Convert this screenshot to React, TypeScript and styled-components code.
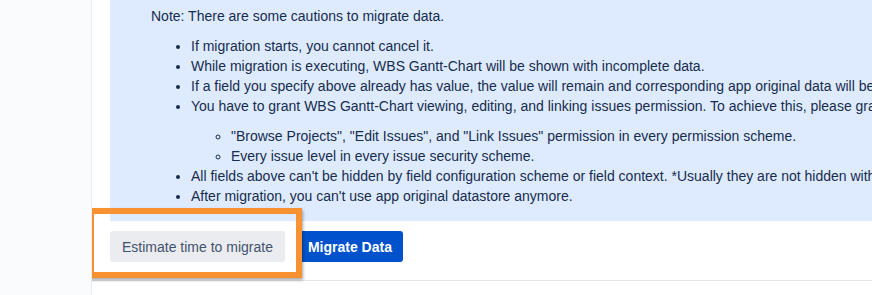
import * as React from 'react';
import styled, { createGlobalStyle } from 'styled-components';

const GlobalStyle = createGlobalStyle`
  html, body {
    margin: 0;
    padding: 0;
    background: #ffffff;
  }
  body {
    font-family: "Liberation Sans", Arial, sans-serif;
    font-size: 14px;
    color: #172b4d;
  }
`;

const cautions = [
  'If migration starts, you cannot cancel it.',
  'While migration is executing, WBS Gantt-Chart will be shown with incomplete data.',
  'If a field you specify above already has value, the value will remain and corresponding app original data will be discarded.',
  'You have to grant WBS Gantt-Chart viewing, editing, and linking issues permission. To achieve this, please grant the following.',
];

const permissions = [
  '"Browse Projects", "Edit Issues", and "Link Issues" permission in every permission scheme.',
  'Every issue level in every issue security scheme.',
];

const trailing = [
  "All fields above can't be hidden by field configuration scheme or field context. *Usually they are not hidden without special settings.",
  "After migration, you can't use app original datastore anymore.",
];

export default function App() {
  return (
    <>
      <GlobalStyle />
      <Page>
        <Sidebar />
        <Main>
          <Section>
            <Notice>
              <Note>Note: There are some cautions to migrate data.</Note>
              <List>
                {cautions.map((text) => (
                  <Item key={text}>{text}</Item>
                ))}
                <SubList>
                  {permissions.map((text) => (
                    <Item key={text}>{text}</Item>
                  ))}
                </SubList>
                {trailing.map((text) => (
                  <Item key={text}>{text}</Item>
                ))}
              </List>
            </Notice>
            <Actions>
              <Highlighted>
                <Button appearance="default">Estimate time to migrate</Button>
                <Marker />
              </Highlighted>
              <Button appearance="primary">Migrate Data</Button>
            </Actions>
          </Section>
        </Main>
      </Page>
    </>
  );
}

const Page = styled.div`
  display: flex;
  height: 295px;
  overflow: hidden;
`;

const Sidebar = styled.aside`
  flex: 0 0 91px;
  background: #fafbfc;
  border-right: 1px solid #ebecf0;
`;

const Main = styled.main`
  flex: 1;
  min-width: 0;
  overflow: hidden;
`;

const Section = styled.section`
  padding-bottom: 18px;
  border-bottom: 1px solid #e4e6ea;
`;

const Notice = styled.div`
  margin-left: 18px;
  width: 1000px;
  padding: 6px 0 15px 41px;
  background: #deebff;
  white-space: nowrap;
  line-height: 20px;
`;

const Note = styled.p`
  margin: 0;
`;

const List = styled.ul`
  margin: 10px 0 0;
  padding-left: 40px;
  list-style: disc;
`;

const SubList = styled.ul`
  margin: 10px 0 0;
  padding-left: 40px;
  list-style: circle;
`;

const Item = styled.li`
  line-height: 20px;
`;

const Actions = styled.div`
  display: flex;
  gap: 12px;
  margin: 10px 0 0 18px;
`;

const Highlighted = styled.div`
  position: relative;
  display: flex;
`;

const Marker = styled.span`
  position: absolute;
  left: -22px;
  top: -23px;
  width: 214px;
  height: 70px;
  box-sizing: border-box;
  border: 6px solid #f79232;
  box-shadow: 1px 2px 3px rgba(0, 0, 0, 0.35);
  pointer-events: none;
`;

const Button = styled.button<{ appearance: 'default' | 'primary' }>`
  height: 31px;
  padding: 0 ${(p) => (p.appearance === 'primary' ? 11 : 12)}px;
  border: none;
  border-radius: 3px;
  font-family: inherit;
  font-size: 14px;
  font-weight: ${(p) => (p.appearance === 'primary' ? 700 : 400)};
  color: ${(p) => (p.appearance === 'primary' ? '#ffffff' : '#42526e')};
  background: ${(p) => (p.appearance === 'primary' ? '#0052cc' : '#ebecf0')};
  cursor: pointer;
`;
